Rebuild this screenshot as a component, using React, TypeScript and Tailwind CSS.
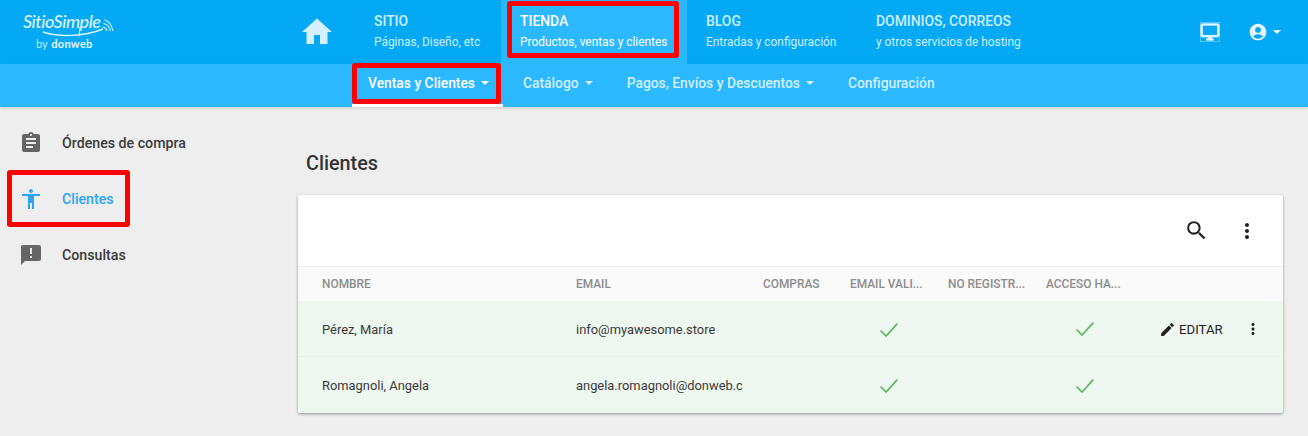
import React from 'react';
import {
  MdAccessibility,
  MdAccountCircle,
  MdAnnouncement,
  MdAssignment,
  MdEdit,
  MdHome,
  MdMoreVert,
  MdOutlineDesktopWindows,
  MdSearch,
} from 'react-icons/md';

const Caret = () => (
  <span className="ml-[6px] inline-block h-0 w-0 border-x-[4px] border-t-[4px] border-x-transparent border-t-current" />
);

const Check = () => (
  <svg width="20" height="16" viewBox="0 0 20 16" fill="none" stroke="#5cb85f" strokeWidth="1.7">
    <path d="M1.5 8.5l5.6 5.6L18.3 1.6" />
  </svg>
);

// Logo: real text, the swoosh and the signal arcs are drawn
const Logo = () => (
  <div className="relative h-[48px] w-[92px] text-[#dff4ff]">
    <span className="absolute left-0 -top-[3px] font-['Lato'] text-[18px] font-medium italic leading-[24px] tracking-[-0.5px]">
      SitioSimple
    </span>
    <svg className="absolute left-0 top-0" width="92" height="30" viewBox="0 0 92 30" fill="none" stroke="currentColor">
      <path d="M20 20c14 5 40 5 60-3" strokeWidth="1.5" />
      <path d="M57 15l-1 9" strokeWidth="1" />
      <path d="M80 15c2.500.5 3.500 1.500 4 4M80.500 11.500c4 .8 6 3 7 7.500M81.500 8c5 1 7 4.500 8.500 11" strokeWidth="1.100" />
    </svg>
    <span className="absolute left-[13px] top-[25px] font-['Lato'] text-[11px] leading-[13px] text-[#bfe9fd]">
      by <b className="ml-[1px] font-bold tracking-[0.3px] text-[#e8f7ff]">donweb</b>
    </span>
  </div>
);

const NavItem = ({
  title,
  sub,
  className,
}: {
  title: string;
  sub: string;
  className?: string;
}) => (
  <div className={`flex h-16 flex-col pt-[13px] text-[#cdeefe] ${className ?? ''}`}>
    <span className="text-[13.9px] font-medium leading-[16px]">{title}</span>
    <span className="mt-[5px] text-[11.9px] leading-[16px]">{sub}</span>
  </div>
);

const SubItem = ({ label, className }: { label: string; className?: string }) => (
  <div className={`flex items-center pb-[5px] text-[13.85px] font-medium text-[#d2effe] ${className ?? ''}`}>
    {label}
    <Caret />
  </div>
);

const SideItem = ({
  icon,
  label,
  active,
}: {
  icon: React.ReactNode;
  label: string;
  active?: boolean;
}) => (
  <div
    className={`flex h-14 items-center pl-[19px] text-[14.2px] font-medium ${
      active ? 'text-[#2ba6f6]' : 'text-[#3b3b3b]'
    }`}
  >
    <span className={`flex w-[43px] ${active ? 'text-[#2ba6f6]' : 'text-[#666]'}`}>{icon}</span>
    <span className="pt-[2px]">{label}</span>
  </div>
);

const COLUMNS = 'grid grid-cols-[254px_187px_87px_98px_98px_1fr] items-center pl-6';

const Row = ({
  name,
  email,
  actions,
  last,
}: {
  name: string;
  email: string;
  actions?: boolean;
  last?: boolean;
}) => (
  <div
    className={`${COLUMNS} h-14 bg-[#eef7f0] pt-[2px] text-[12.9px] text-[#3a3a3a] ${
      last ? '' : 'border-b border-[#e8f0e9]'
    }`}
  >
    <span>{name}</span>
    <span className="w-[166px] overflow-hidden whitespace-nowrap">{email}</span>
    <span />
    <span className="flex justify-center pr-[20px]">
      <Check />
    </span>
    <span />
    <div className="flex items-center">
      <span className="ml-[29px] flex w-[20px] justify-center">
        <Check />
      </span>
      {actions && (
        <div className="ml-[64px] flex items-center text-[13.2px] text-[#222]">
          <MdEdit size={17} className="mr-[3px]" />
          EDITAR
          <MdMoreVert size={18} className="ml-[21px]" />
        </div>
      )}
    </div>
  </div>
);

const App: React.FC = () => {
  return (
    <div className="relative h-[436px] w-[1308px] overflow-hidden bg-[#eeeeee] font-['Roboto',sans-serif]">
      {/* Top bar */}
      <div className="flex h-16 items-start bg-[#04a9f6]">
        <div className="w-[302px] pl-[23px] pt-[12px]">
          <Logo />
        </div>
        <div className="flex h-16 w-[72px] items-center text-[#d5f0fe]">
          <MdHome size={36} className="-ml-[3px]" />
        </div>
        <NavItem title="SITIO" sub="Páginas, Diseño, etc" className="w-[127px]" />
        <NavItem
          title="TIENDA"
          sub="Productos, ventas y clientes"
          className="w-[186px] bg-[#2bb8fe] pl-[19px] !text-white"
        />
        <NavItem title="BLOG" sub="Entradas y configuración" className="w-[189px] pl-[19px]" />
        <NavItem title="DOMINIOS, CORREOS" sub="y otros servicios de hosting" className="w-[324px]" />
        <div className="flex h-16 items-center text-[#e8f7ff]">
          <MdOutlineDesktopWindows size={20} stroke="currentColor" strokeWidth={0.8} />
          <MdAccountCircle size={20} className="ml-[28px]" />
          <span className="ml-[5px] -mt-[1px] h-0 w-0 border-x-[4px] border-t-[4px] border-x-transparent border-t-current" />
        </div>
      </div>

      {/* Second bar */}
      <div className="flex h-[43px] bg-[#2bb8fe] pl-[352px] shadow-[0_1px_3px_rgba(0,0,0,0.15)]">
        <div className="flex h-[43px] w-[151px] items-center border-b-[3px] border-white pb-[2px] pl-4 text-[13.85px] font-medium text-white">
          Ventas y Clientes
          <Caret />
        </div>
        <SubItem label="Catálogo" className="ml-[20px]" />
        <SubItem label="Pagos, Envíos y Descuentos" className="ml-[34px]" />
        <div className="ml-[34px] flex items-center pb-[5px] text-[13.85px] font-medium text-[#d2effe]">Configuración</div>
      </div>

      <div className="flex">
        {/* Sidebar */}
        <div className="w-[298px] pt-[8px]">
          <SideItem icon={<MdAssignment size={24} />} label="Órdenes de compra" />
          <SideItem icon={<MdAccessibility size={24} />} label="Clientes" active />
          <SideItem icon={<MdAnnouncement size={24} />} label="Consultas" />
        </div>

        {/* Content */}
        <div className="w-[985px]">
          <h1 className="mt-[45px] pl-2 text-[19.8px] font-medium leading-[24px] text-[#333]">Clientes</h1>
          <div className="mt-[19px] overflow-hidden rounded-[2px] bg-white shadow-[0_1px_3px_rgba(0,0,0,0.4)]">
            <div className="flex h-[71px] items-center justify-end pr-[24px] text-[#222]">
              <MdSearch size={25} />
              <MdMoreVert size={24} className="ml-[26px]" />
            </div>
            <div className={`${COLUMNS} h-[35px] border-t border-[#eeeeee] bg-[#fafafa] pt-[2px] text-[11.9px] font-medium text-[#8c8c8c]`}>
              <span>NOMBRE</span>
              <span>EMAIL</span>
              <span>COMPRAS</span>
              <span>EMAIL VALI...</span>
              <span>NO REGISTR...</span>
              <span>ACCESO HA...</span>
            </div>
            <Row name="Pérez, María" email="info@myawesome.store" actions />
            <Row name="Romagnoli, Angela" email="angela.romagnoli@donweb.com" last />
          </div>
        </div>
      </div>

      {/* Red highlight boxes drawn on top of the screenshot */}
      <div className="absolute left-[507px] top-[1px] h-[57px] w-[172px] rounded-[3px] border-[5px] border-[#fe0000]" />
      <div className="absolute left-[352px] top-[63px] h-[41px] w-[149px] rounded-[3px] border-[5px] border-[#fe0000]" />
      <div className="absolute left-[7px] top-[170px] h-[57px] w-[123px] rounded-[3px] border-[5px] border-[#fe0000]" />
    </div>
  );
};

export default App;
